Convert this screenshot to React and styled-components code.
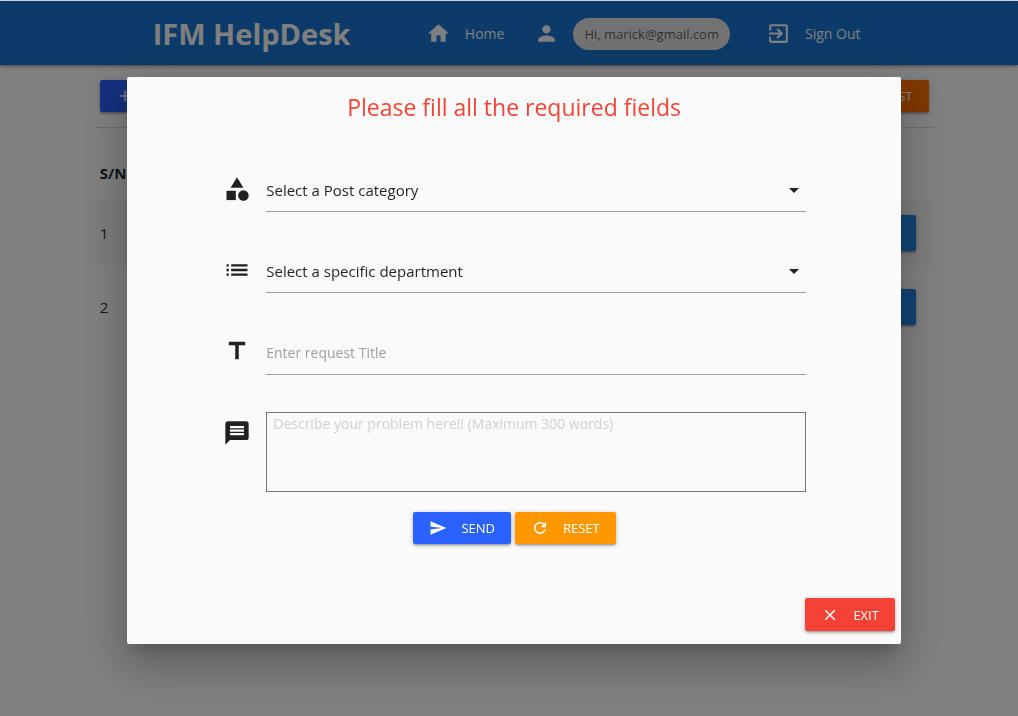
import React from 'react';
import styled, { createGlobalStyle } from 'styled-components';
import {
  MdAdd,
  MdArrowDropDown,
  MdCategory,
  MdClose,
  MdExitToApp,
  MdHome,
  MdList,
  MdMessage,
  MdPerson,
  MdRefresh,
  MdSend,
  MdTitle,
} from 'react-icons/md';

const GlobalStyle = createGlobalStyle`
  *, *::before, *::after { box-sizing: border-box; }
  body {
    margin: 0;
    background: #fff;
    color: rgba(0, 0, 0, 0.87);
    font-family: "Open Sans", "Noto Sans", sans-serif;
    font-size: 15px;
    line-height: 20px;
  }
  button, input, select, textarea { font-family: inherit; }
`;

const raised = '0 2px 2px 0 rgba(0,0,0,.14), 0 3px 1px -2px rgba(0,0,0,.12), 0 1px 5px 0 rgba(0,0,0,.2)';

const Page = styled.div`
  min-height: 100vh;
  border-top: 1px solid #d9dfdd;
`;

const NavBar = styled.header`
  display: flex;
  align-items: center;
  justify-content: space-between;
  height: 64px;
  padding: 1px 14% 0 15%;
  background: #1976d2;
  box-shadow: ${raised};
  color: #fff;
`;

const Brand = styled.a`
  color: inherit;
  font-size: 29px;
  font-weight: 700;
  line-height: 40px;
  text-decoration: none;
  white-space: nowrap;
`;

const NavLinks = styled.nav`
  display: flex;
  align-items: center;
`;

const NavLink = styled.a`
  display: flex;
  align-items: center;
  gap: 14px;
  padding: 0 15px;
  color: inherit;
  font-size: 14px;
  text-decoration: none;
  white-space: nowrap;

  svg { width: 25px; height: 25px; }
`;

const Chip = styled.span`
  height: 32px;
  margin-right: 6px;
  padding: 0 11px;
  border-radius: 16px;
  background: #e4e4e4;
  color: rgba(0, 0, 0, 0.6);
  font-size: 13px;
  line-height: 32px;
`;

const Main = styled.main`
  width: 82.4%;
  margin-left: 9.3%;
`;

const Toolbar = styled.div`
  display: flex;
  justify-content: space-between;
  padding: 15px 5px;
  border-bottom: 1px solid #e0e0e0;
`;

const Button = styled.button`
  display: inline-flex;
  align-items: center;
  gap: 14px;
  height: ${({ $height }) => $height || 32}px;
  min-width: ${({ $minWidth }) => $minWidth || 0}px;
  padding: 0 16px;
  border: 0;
  border-radius: 2px;
  background: ${({ $color }) => $color};
  box-shadow: ${raised};
  color: #fff;
  font-size: 13px;
  font-weight: 500;
  line-height: 20px;
  text-transform: uppercase;
  vertical-align: middle;
  cursor: pointer;

  svg { width: 18px; height: 18px; }
`;

const RequestTable = styled.table`
  width: 100%;
  margin-top: 18px;
  border-collapse: collapse;

  th, td { padding: 0 5px; text-align: left; }
  th { height: 54px; font-weight: 700; }
  td:last-child, th:last-child { padding-right: 18px; text-align: right; }
`;

const RequestRow = styled.tr`
  height: ${({ $striped }) => ($striped ? 66 : 82)}px;
  background: ${({ $striped }) => ($striped ? 'rgba(242, 242, 242, 0.5)' : 'transparent')};
`;

const Overlay = styled.div`
  position: fixed;
  inset: 1px 0 0;
  background: rgba(0, 0, 0, 0.5);
`;

const Modal = styled.section`
  width: 76%;
  margin: 76px 0 0 12.5%;
  padding-bottom: 13px;
  border-radius: 2px;
  background: #fafafa;
  box-shadow: 0 24px 38px 3px rgba(0,0,0,.14), 0 9px 46px 8px rgba(0,0,0,.12), 0 11px 15px -7px rgba(0,0,0,.2);
`;

const ModalTitle = styled.h1`
  margin: 0;
  padding: 14px 0 45px;
  color: #f44336;
  font-size: 23px;
  font-weight: 400;
  line-height: 32px;
  text-align: center;
`;

const Form = styled.form`
  display: flex;
  flex-direction: column;
  gap: 37px;
  padding: 0 95px 0 96px;
`;

const Field = styled.div`
  display: grid;
  grid-template-columns: 28px 1fr;
  column-gap: 15px;
  align-items: start;
`;

const FieldLabel = styled.label`
  display: flex;
  margin-top: 7px;
  color: #212121;

  svg { width: 28px; height: 28px; }
`;

const SelectBox = styled.div`
  display: grid;
  grid-template-areas: "box";
  align-items: center;

  > * { grid-area: box; }
  svg {
    width: 24px;
    height: 24px;
    justify-self: end;
    pointer-events: none;
  }
`;

const Select = styled.select`
  width: 100%;
  height: 44px;
  padding: 0;
  border: 0;
  border-bottom: 1px solid #9e9e9e;
  border-radius: 0;
  outline: 0;
  appearance: none;
  background: transparent;
  color: rgba(0, 0, 0, 0.87);
  font-size: 15px;
`;

const TextInput = styled.input`
  width: 100%;
  height: 45px;
  padding: 0;
  border: 0;
  border-bottom: 1px solid #9e9e9e;
  outline: 0;
  background: transparent;
  font-size: 14px;

  &::placeholder { color: #9e9e9e; }
`;

const TextArea = styled.textarea`
  display: block;
  width: 100%;
  height: 80px;
  padding: 1px 6px;
  border: 1px solid #757575;
  outline: 0;
  resize: none;
  background: transparent;
  font-size: 14px;
  line-height: 20px;

  &::placeholder { color: #d1d1d1; }
`;

const Actions = styled.div`
  display: flex;
  justify-content: center;
  gap: 4px;
  margin-top: -17px;
`;

const ModalFooter = styled.footer`
  display: flex;
  justify-content: flex-end;
  padding: 54px 6px 0;
`;

const requests = [1, 2];

export default function App() {
  return (
    <>
      <GlobalStyle />
      <Page>
        <NavBar>
          <Brand href="#">IFM HelpDesk</Brand>
          <NavLinks>
            <NavLink href="#"><MdHome />Home</NavLink>
            <NavLink as="div"><MdPerson /><Chip>Hi, marick@gmail.com</Chip></NavLink>
            <NavLink href="#"><MdExitToApp />Sign Out</NavLink>
          </NavLinks>
        </NavBar>
        <Main>
          <Toolbar>
            <Button type="button" $color="#2962ff"><MdAdd />Add</Button>
            <Button type="button" $color="#ff6f00">Request</Button>
          </Toolbar>
          <RequestTable>
            <thead>
              <tr><th>S/N</th><th aria-label="Actions" /></tr>
            </thead>
            <tbody>
              {requests.map((number) => (
                <RequestRow key={number} $striped={number % 2 === 1}>
                  <td>{number}</td>
                  <td>
                    <Button type="button" aria-label={`Open request ${number}`} $color="#1e88e5" $height={36} $minWidth={80} />
                  </td>
                </RequestRow>
              ))}
            </tbody>
          </RequestTable>
        </Main>
      </Page>
      <Overlay>
        <Modal role="dialog" aria-modal="true" aria-labelledby="modal-title">
          <ModalTitle id="modal-title">Please fill all the required fields</ModalTitle>
          <Form onSubmit={(event) => event.preventDefault()}>
            <Field>
              <FieldLabel htmlFor="category" aria-label="Post category"><MdCategory /></FieldLabel>
              <SelectBox>
                <Select id="category"><option>Select a Post category</option></Select>
                <MdArrowDropDown />
              </SelectBox>
            </Field>
            <Field>
              <FieldLabel htmlFor="department" aria-label="Department"><MdList /></FieldLabel>
              <SelectBox>
                <Select id="department"><option>Select a specific department</option></Select>
                <MdArrowDropDown />
              </SelectBox>
            </Field>
            <Field>
              <FieldLabel htmlFor="title" aria-label="Request title"><MdTitle /></FieldLabel>
              <TextInput id="title" type="text" placeholder="Enter request Title" />
            </Field>
            <Field>
              <FieldLabel htmlFor="problem" aria-label="Problem description"><MdMessage /></FieldLabel>
              <TextArea id="problem" placeholder="Describe your problem here!! (Maximum 300 words)" />
            </Field>
            <Actions>
              <Button type="submit" $color="#2962ff"><MdSend />Send</Button>
              <Button type="reset" $color="#ff9800"><MdRefresh />Reset</Button>
            </Actions>
          </Form>
          <ModalFooter>
            <Button type="button" $color="#f44336" $height={33}><MdClose />Exit</Button>
          </ModalFooter>
        </Modal>
      </Overlay>
    </>
  );
}
